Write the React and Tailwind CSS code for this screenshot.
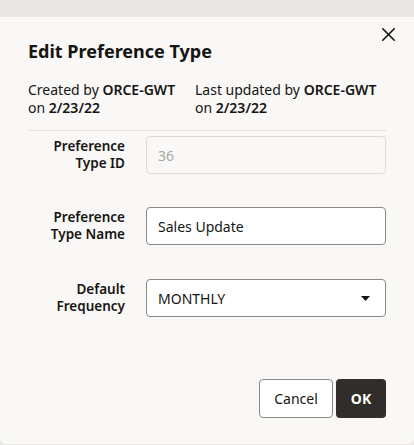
import { X } from 'lucide-react'

function FieldRow({ label, children }) {
  return (
    <div className='flex items-center'>
      <label className='w-[97px] shrink-0 text-right text-[13.5px] leading-[17px] font-semibold text-[#161513]'>
        {label}
      </label>
      <div className='ml-[21px] flex-1'>{children}</div>
    </div>
  )
}

function App() {
  return (
    <div
      className='w-[414px] h-[445px] bg-[#e9e8e6] overflow-hidden'
      style={{ fontFamily: '"Noto Sans", "Open Sans", sans-serif' }}
    >
      <div className='mt-[17px] h-[427px] bg-[#f9f8f6] rounded-b-[6px] relative px-[28px]'>
        <button className='absolute right-[14px] top-[5px] w-[24px] h-[24px] flex items-center justify-center text-[#161513]'>
          <X size={23} strokeWidth={1.7} />
        </button>

        <h1 className='pt-[22px] text-[18px] leading-[24px] font-bold text-[#161513]'>
          Edit Preference Type
        </h1>

        <div className='mt-[18px] flex text-[14px] leading-[18px] text-[#161513]'>
          <div className='w-[167px]'>
            Created by <span className='font-semibold'>ORCE-GWT</span>
            <br />
            on <span className='font-semibold'>2/23/22</span>
          </div>
          <div>
            Last updated by <span className='font-semibold'>ORCE-GWT</span>
            <br />
            on <span className='font-semibold'>2/23/22</span>
          </div>
        </div>

        <div className='mt-[13px] border-t border-[#e4e2df]' />

        <div className='mt-[5px] flex flex-col'>
          <FieldRow label={<>Preference<br />Type ID</>}>
            <div className='h-[38px] rounded-[4px] border border-[#dedcd8] flex items-center px-[11px] text-[14px] text-[#a8a6a2]'>
              36
            </div>
          </FieldRow>

          <div className='mt-[33px]'>
            <FieldRow label={<>Preference<br />Type Name</>}>
              <input
                type='text'
                defaultValue='Sales Update'
                className='w-full h-[38px] rounded-[4px] border border-[#8b8985] bg-white px-[11px] text-[14px] text-[#161513] outline-none'
              />
            </FieldRow>
          </div>

          <div className='mt-[34px]'>
            <FieldRow label={<>Default<br />Frequency</>}>
              <div className='h-[38px] rounded-[4px] border border-[#8b8985] bg-white flex items-center justify-between pl-[11px] pr-[15px] text-[14px] text-[#161513]'>
                <span>MONTHLY</span>
                <svg width='9' height='5' viewBox='0 0 9 5'>
                  <path d='M0 0h9L4.5 5z' fill='#161513' />
                </svg>
              </div>
            </FieldRow>
          </div>
        </div>

        <div className='mt-[62px] flex justify-end gap-[3px]'>
          <button className='h-[39px] w-[74px] rounded-[4px] border border-[#8b8985] bg-white text-[14px] text-[#161513]'>
            Cancel
          </button>
          <button className='h-[39px] w-[50px] rounded-[4px] bg-[#312d2a] text-[14px] font-bold text-white'>
            OK
          </button>
        </div>
      </div>
    </div>
  )
}

export default App
